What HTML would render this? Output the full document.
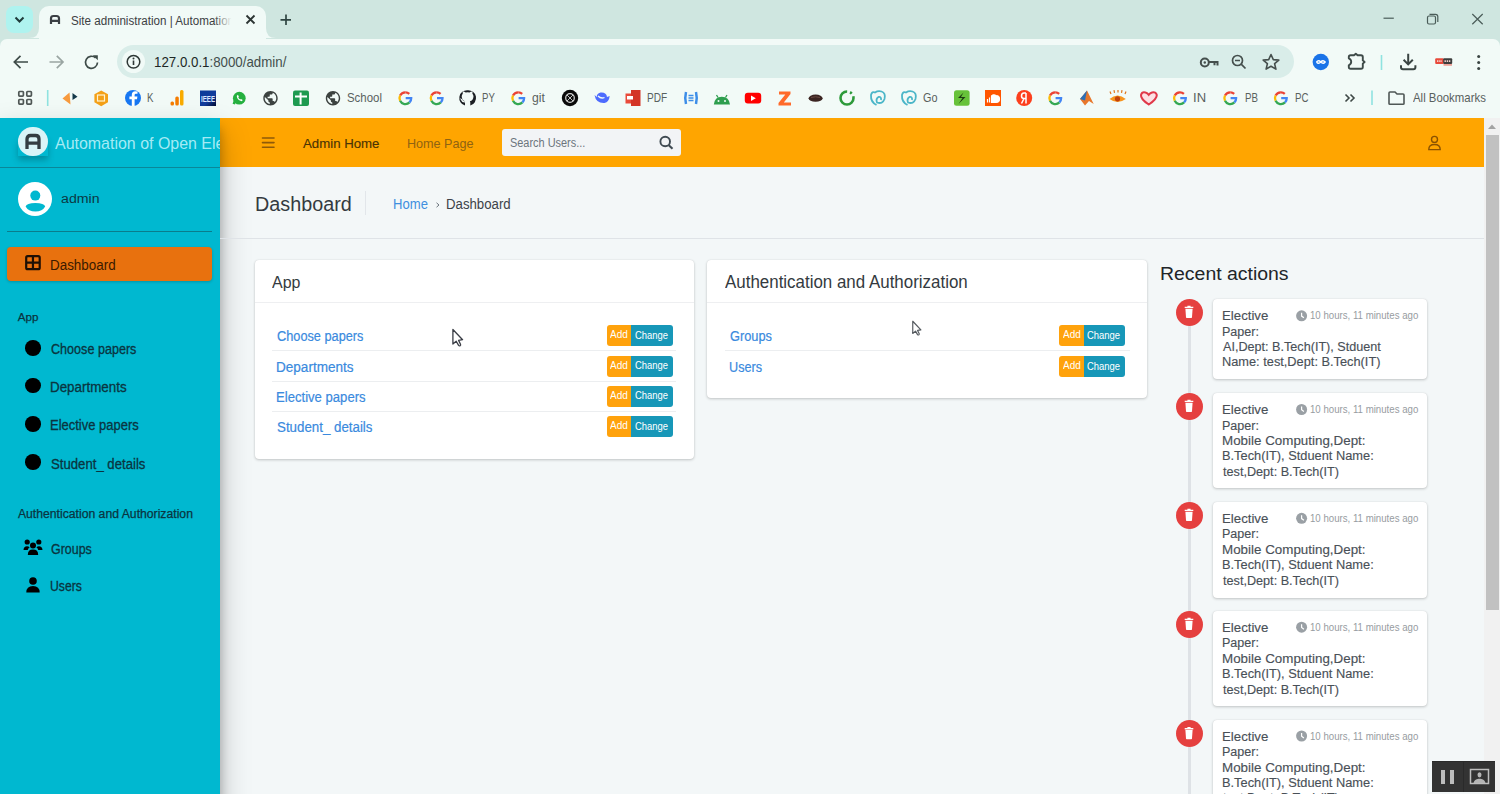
<!DOCTYPE html>
<html><head><meta charset="utf-8">
<style>
*{box-sizing:border-box;margin:0;padding:0}
html,body{width:1500px;height:794px;overflow:hidden;font-family:"Liberation Sans",sans-serif;background:#f3f7f8;position:relative}
.a{position:absolute}
.t{position:absolute;white-space:nowrap;line-height:1;transform-origin:0 0}
svg{position:absolute;overflow:visible}
#tabbar{left:0;top:0;width:1500px;height:39px;background:#cfe6e0}
#toolbar{left:0;top:39px;width:1500px;height:79px;background:#f2faf7;border-radius:7px 7px 0 0}
#sidebar{left:0;top:118px;width:220px;height:676px;background:#00b8d0}
#navbar{left:220px;top:118px;width:1264px;height:49px;background:#ffa500}
#content{left:220px;top:167px;width:1264px;height:627px;background:#f3f7f8}
.card{position:absolute;background:#fff;border-radius:4px;box-shadow:0 0 1px rgba(0,0,0,.13),0 1px 3px rgba(0,0,0,.2)}
.btn{position:absolute;height:21px;border-radius:3px;overflow:hidden}
.btn i{position:absolute;top:0;height:21px}
.rc{position:absolute;width:27px;height:27px;border-radius:50%;background:#e5403f}
.ra{position:absolute;left:1213px;width:214px;background:#fff;border-radius:4px;box-shadow:0 0 1px rgba(0,0,0,.13),0 1px 3px rgba(0,0,0,.2)}
.bm{position:absolute;top:90px;width:16px;height:16px}
</style></head>
<body>
<!-- ===== Chrome tab bar ===== -->
<div id="tabbar" class="a"></div>
<div class="a" style="left:6px;top:6px;width:27px;height:27px;border-radius:8px;background:#aff3ef"></div>
<svg style="left:0;top:0" width="40" height="40"><path d="M15.5 17.5 L19.5 21.5 L23.5 17.5" stroke="#1f3b3b" stroke-width="2" fill="none"/></svg>
<!-- active tab -->
<div class="a" style="left:39px;top:6px;width:227px;height:40px;background:#f1faf7;border-radius:10px 10px 0 0"></div>
<svg style="left:29px;top:28px" width="10" height="10"><path d="M0 10 Q10 10 10 0 L10 10 Z" fill="#f1faf7"/></svg>
<svg style="left:266px;top:28px" width="10" height="10"><path d="M10 10 Q0 10 0 0 L0 10 Z" fill="#f1faf7"/></svg>
<svg style="left:48px;top:13px" width="14" height="14"><path d="M3 11 V5.5 Q3 3 5.5 3 H8.5 Q11 3 11 5.5 V11 M3 7.8 H11" stroke="#3a3f44" stroke-width="2.2" fill="none"/></svg>
<svg style="left:244px;top:13px" width="14" height="14"><path d="M2.5 2.5 L10.5 10.5 M10.5 2.5 L2.5 10.5" stroke="#2b3533" stroke-width="1.8"/></svg>
<svg style="left:279px;top:13px" width="14" height="14"><path d="M7 1.5 V12 M1.5 6.8 H12" stroke="#2f4542" stroke-width="1.7"/></svg>
<!-- window controls -->
<svg style="left:1380px;top:10px" width="110" height="20"><path d="M3.5 8.2 H13.8" stroke="#4a5c58" stroke-width="1.2"/>
<rect x="47.5" y="6" width="8" height="8" rx="1.5" stroke="#4a5c58" stroke-width="1.2" fill="none"/><path d="M49.5 4.3 H55.5 Q57.8 4.3 57.8 6.6 V12" stroke="#4a5c58" stroke-width="1.2" fill="none"/>
<path d="M92.3 4 L102.7 14.3 M102.7 4 L92.3 14.3" stroke="#4a5c58" stroke-width="1.2"/></svg>

<!-- ===== Toolbar ===== -->
<div class="a" style="left:0;top:39px;width:1500px;height:8px;background:#cfe6e0"></div>
<div id="toolbar" class="a"></div>
<svg style="left:0;top:40px" width="110" height="45"><path d="M28 22 H14.5 M20.5 15.8 L14.3 22 L20.5 28.2" stroke="#3e4b48" stroke-width="1.7" fill="none"/>
<path d="M63 22 H49.5 M56.8 15.8 L63 22 L56.8 28.2" stroke="#9aa5a2" stroke-width="1.7" fill="none"/>
<path d="M97.5 22.5 A6 6 0 1 1 95.6 17.9" stroke="#3e4b48" stroke-width="1.7" fill="none"/><path d="M92.8 15.2 H97.8 V20.2 Z" fill="#3e4b48"/></svg>
<div class="a" style="left:117px;top:45px;width:1177px;height:33px;border-radius:17px;background:#d9ede9"></div>
<div class="a" style="left:122px;top:50px;width:23px;height:23px;border-radius:50%;background:#f1faf7"></div>
<svg style="left:122px;top:50px" width="23" height="23"><circle cx="11.5" cy="11.8" r="6.3" stroke="#2e3836" stroke-width="1.5" fill="none"/><path d="M11.5 10.5 V15" stroke="#2e3836" stroke-width="1.6"/><circle cx="11.5" cy="8.4" r="1" fill="#2e3836"/></svg>
<!-- url-bar right icons -->
<svg style="left:1195px;top:50px" width="300" height="25">
 <circle cx="9.8" cy="12.5" r="4" stroke="#454f4d" stroke-width="2" fill="none"/><circle cx="9.8" cy="12.5" r="1.2" fill="#454f4d"/><path d="M13.8 12 H22.5 V15.5 M19.5 12 V15.2" stroke="#454f4d" stroke-width="2" fill="none"/>
 <circle cx="42.5" cy="10.5" r="5" stroke="#454f4d" stroke-width="1.7" fill="none"/><path d="M40 10.5 H45 M46.2 14.2 L50.5 18.5" stroke="#454f4d" stroke-width="1.7"/>
 <path d="M76 4.5 L78.3 9.6 L83.8 10.1 L79.6 13.7 L80.9 19.1 L76 16.2 L71.1 19.1 L72.4 13.7 L68.2 10.1 L73.7 9.6 Z" stroke="#454f4d" stroke-width="1.6" fill="none" stroke-linejoin="round"/>
 <circle cx="125.8" cy="12" r="8.2" fill="#1a73e8"/><path d="M121.5 12 q2-2.5 4.3 0 q2.3 2.5 4.3 0 q-2-2.5 -4.3 0 q-2.3 2.5 -4.3 0" stroke="#fff" stroke-width="1.5" fill="none"/>
 <path d="M155.6 5.2 H159 L160.8 3.7 L162.6 5.2 H166 Q167.8 5.2 167.8 7 V10.4 L169.6 12 L167.8 13.6 V17 Q167.8 18.8 166 18.8 H155.6 Q153.8 18.8 153.8 17 V15.3 Q156.2 14.2 156.2 11.8 Q156.2 9.4 153.8 8.3 V7 Q153.8 5.2 155.6 5.2 Z" stroke="#3e4a48" stroke-width="1.9" fill="none" stroke-linejoin="round"/>
 <path d="M186.5 5 V20" stroke="#8fe3e0" stroke-width="1.6"/>
 <path d="M213.2 3.8 V14.2 M208.6 9.8 L213.2 14.4 L217.8 9.8 M206 15.2 V17.2 Q206 19.2 208 19.2 H218.4 Q220.4 19.2 220.4 17.2 V15.2" stroke="#3a4442" stroke-width="2" fill="none"/>
 <rect x="240.2" y="8.2" width="8.5" height="5.8" rx="1" fill="#e8493b"/><rect x="248.2" y="8.2" width="9" height="5.8" rx="1" fill="#3d3d3d"/><path d="M242 11.1 H247 M249.5 11.1 H255.8" stroke="#f4d0cc" stroke-width="1.6" stroke-dasharray="1.4 .8"/><rect x="248.5" y="14.5" width="8.5" height=".9" fill="#e8493b"/>
 <circle cx="283.7" cy="6.5" r="1.5" fill="#3a4442"/><circle cx="283.7" cy="12.5" r="1.5" fill="#3a4442"/><circle cx="283.7" cy="18.5" r="1.5" fill="#3a4442"/>
</svg>
<!-- bookmarks bar icons -->
<svg style="left:0;top:82px" width="1500" height="30">
 <g stroke="#4f5755" stroke-width="1.7" fill="none"><rect x="18.8" y="9.5" width="4.6" height="4.6" rx=".8"/><rect x="26.8" y="9.5" width="4.6" height="4.6" rx=".8"/><rect x="18.8" y="17.5" width="4.6" height="4.6" rx=".8"/><rect x="26.8" y="17.5" width="4.6" height="4.6" rx=".8"/></g>
 <path d="M47.7 8 V24" stroke="#8fe3e0" stroke-width="1.6"/>
 <path d="M62.5 16.5 L69.5 10.5 L70.5 22.5 Z" fill="#f79a3e"/><path d="M72.5 11 L77.5 14.8 L72.5 18 Z" fill="#13384a"/>
 <path d="M101.2 8.5 L108 12.3 V20.3 L101.2 24.2 L94.4 20.3 V12.3 Z" fill="#f4a017"/><rect x="97.5" y="13" width="7" height="6" fill="none" stroke="#fff3d0" stroke-width="1.2"/>
 <circle cx="133" cy="16" r="8" fill="#1877f2"/><path d="M134.6 24 V17.3 H137 L137.4 14.6 H134.6 V13 Q134.6 11.8 135.9 11.8 H137.5 V9.5 Q136.6 9.3 135.3 9.3 Q131.8 9.3 131.8 13 V14.6 H129.4 V17.3 H131.8 V24 Z" fill="#fff"/>
 <rect x="170.5" y="19.5" width="3.5" height="4" rx="1.5" fill="#f57c00"/><rect x="175.3" y="14.5" width="3.5" height="9" rx="1.5" fill="#f57c00"/><rect x="180" y="8" width="3.5" height="15.5" rx="1.5" fill="#f9ab00"/>
 <defs><linearGradient id="ieee" x1="0" y1="0" x2="1" y2="1"><stop offset="0" stop-color="#0a3a9a"/><stop offset=".6" stop-color="#123c9c"/><stop offset="1" stop-color="#020a30"/></linearGradient></defs><rect x="200" y="8.5" width="16" height="15.5" fill="url(#ieee)"/><text x="201" y="20.3" font-family="Liberation Sans" font-size="9.5" font-weight="700" fill="#dde6ff" textLength="14" lengthAdjust="spacingAndGlyphs">IEEE</text>
 <g transform="translate(239.3,16.2) scale(.85) translate(-239.5,-16)"><circle cx="239.5" cy="16" r="7.5" fill="#25b03f"/><path d="M233 23 L234.5 19" stroke="#25b03f" stroke-width="3"/><path d="M236.5 13.5 Q237 18.5 242.5 19.5 L243.5 18 L241.5 16.8 L240.5 17.5 Q238.8 16.5 238.3 15 L239 14 L237.8 12 Z" fill="#fff"/></g>
 <g transform="translate(261.86,7.56) scale(.72)"><circle cx="12" cy="12" r="9.6" fill="#f1faf7"/><path d="M12 2C6.48 2 2 6.48 2 12s4.48 10 10 10 10-4.48 10-10S17.52 2 12 2zm-1 17.930c-3.95-.49-7-3.850-7-7.930 0-.62.08-1.210.21-1.790L9 15v1c0 1.100.9 2 2 2v1.930zm6.900-2.540c-.26-.81-1-1.390-1.900-1.390h-1v-3c0-.55-.45-1-1-1H8v-2h2c.55 0 1-.45 1-1V7h2c1.100 0 2-.9 2-2v-.41c2.930 1.190 5 4.060 5 7.410 0 2.080-.8 3.970-2.100 5.390z" fill="#3c4240"/></g>
 <rect x="293" y="8.5" width="16" height="15.5" rx="2" fill="#1e9a50"/><path d="M300.6 10.5 V22.5 M295 14.5 H307" stroke="#fff" stroke-width="2"/>
 <g transform="translate(324.36,7.56) scale(.72)"><circle cx="12" cy="12" r="9.6" fill="#f1faf7"/><path d="M12 2C6.48 2 2 6.48 2 12s4.48 10 10 10 10-4.48 10-10S17.52 2 12 2zm-1 17.930c-3.95-.49-7-3.850-7-7.930 0-.62.08-1.210.21-1.790L9 15v1c0 1.100.9 2 2 2v1.930zm6.900-2.540c-.26-.81-1-1.390-1.900-1.390h-1v-3c0-.55-.45-1-1-1H8v-2h2c.55 0 1-.45 1-1V7h2c1.100 0 2-.9 2-2v-.41c2.930 1.190 5 4.060 5 7.410 0 2.080-.8 3.970-2.100 5.390z" fill="#3c4240"/></g>

</svg>
<svg style="left:0;top:82px" width="1500" height="30">
 <defs><g id="G"><path d="M5.7 0.2 A5.8 5.8 0 0 0 0.4 3.4" stroke="#ea4335" stroke-width="2.3" fill="none"/><path d="M0.4 3.4 A5.8 5.8 0 0 0 0.4 8.6" stroke="#fbbc05" stroke-width="2.3" fill="none"/><path d="M0.4 8.6 A5.8 5.8 0 0 0 9.8 10.2" stroke="#34a853" stroke-width="2.3" fill="none"/><path d="M9.8 10.2 A5.8 5.8 0 0 0 11.5 6 H6" stroke="#4285f4" stroke-width="2.3" fill="none"/><path d="M5.7 0.2 A5.8 5.8 0 0 1 9.6 1.7" stroke="#ea4335" stroke-width="2.3" fill="none"/></g></defs>
 <use href="#G" x="399.7" y="10.2"/><use href="#G" x="431" y="10.2"/><use href="#G" x="512.6" y="10.2"/><use href="#G" x="1049.6" y="10.2"/><use href="#G" x="1174.3" y="10.2"/><use href="#G" x="1224.6" y="10.2"/><use href="#G" x="1275.2" y="10.2"/>
 <path d="M467.6 8.2 A7.8 7.8 0 0 0 465 23.5 V20.5 Q462 20.8 461 18 Q460.5 17 459.8 16.6 Q462 16 462.8 18.2 Q463.8 19.8 465.3 19.2 Q462 18.5 461.7 14.5 Q461.7 12.8 462.8 11.8 Q462.4 10.2 463 9.6 Q464.5 9.6 465.7 10.6 Q467.6 10.1 469.5 10.6 Q470.7 9.6 472.2 9.6 Q472.8 10.2 472.4 11.8 Q473.5 12.8 473.5 14.5 Q473.2 18.5 469.9 19.2 Q470.3 20 470.3 21 V23.5 A7.8 7.8 0 0 0 467.6 8.2 Z" fill="#1b1f23"/>
 <circle cx="570" cy="16" r="8.2" fill="#0a0a0a"/><circle cx="570" cy="16" r="4.3" stroke="#d8d8d8" stroke-width="1.2" fill="none"/><path d="M567 13 L573 19 M573 13 L567 19" stroke="#bbb" stroke-width="1"/>
 <path d="M594.5 13 Q596 21.5 604.5 21 Q609 20 609.7 14 L607 15 Q606.5 10 600.5 10.5 Q596.5 11.5 596.8 15 Z" fill="#4d6bfe"/><path d="M598 14 Q601 17 604.5 15.5" stroke="#f1faf7" stroke-width="1.3" fill="none"/>
 <rect x="625.5" y="11.5" width="9" height="10" fill="#e94a3a"/><path d="M631 8 H640.5 V24 H631 Z" fill="#d33426"/><rect x="627" y="14" width="6" height="3.5" fill="#fff"/>
 <path d="M686 10 Q684.5 16 686 22 M696 10 Q697.5 16 696 22" stroke="#3c8de8" stroke-width="2.5" fill="none"/><path d="M688.5 13.5 H693.5 M688.5 16 H693.5 M688.5 18.5 H693.5" stroke="#3c8de8" stroke-width="1.5"/>
 <path d="M713.8 22.5 Q714.5 15 721.8 14.7 Q729.2 15 730 22.5 Z" fill="#2e9e4e"/><path d="M716.5 13 L718 15.5 M727 13 L725.5 15.5" stroke="#2e9e4e" stroke-width="1.3"/><circle cx="718.5" cy="19" r="1" fill="#f1faf7"/><circle cx="725" cy="19" r="1" fill="#f1faf7"/>
 <rect x="744.8" y="10.8" width="16.4" height="10.8" rx="3" fill="#ff0000"/><path d="M751 13.5 L755.8 16.2 L751 18.9 Z" fill="#fff"/>
 <path d="M779 9.5 H790.5 V12 L783.8 20.5 H791 V23.5 H778.5 V21 L785.3 12.5 H779 Z" fill="#ff6a2a"/>
 <ellipse cx="815.6" cy="16.2" rx="7" ry="3.6" fill="#3b2522"/><path d="M811 15.5 Q815.6 14 820 15.5" stroke="#6b4a42" stroke-width="1" fill="none"/>
 <circle cx="847" cy="16" r="6.5" stroke="#2d9a3a" stroke-width="2.6" fill="none" stroke-dasharray="30 3 2 3"/>
 <path d="M876.5 23 Q870.5 20 871 13 Q872 9 875 10.5 Q878 8.5 881.5 9.5 Q886 11 884.5 17 Q882.5 22.5 877 20.5 Q875.5 17 878.5 15 Q881.5 14.5 881 18" stroke="#4bb6c8" stroke-width="1.8" fill="none"/>
 <path d="M907.5 23 Q901.5 20 902 13 Q903 9 906 10.5 Q909 8.5 912.5 9.5 Q917 11 915.5 17 Q913.5 22.5 908 20.5 Q906.5 17 909.5 15 Q912.5 14.5 912 18" stroke="#4bb6c8" stroke-width="1.8" fill="none"/>
 <rect x="954" y="8.2" width="15.6" height="15.6" rx="2.5" fill="#67c23a"/><path d="M963.5 10.5 L958 16 H962.5 L958.5 22 L965.5 15 H961 Z" fill="#1e3a12"/>
 <rect x="985" y="8" width="16" height="16" fill="#ff5500"/><path d="M987.5 20.5 V17 M989.5 20.5 V15.5 M991.5 20.5 V14 Q993.5 12 996 13.5 Q999.5 13.5 999.5 17 Q999.5 20.5 996 20.5 Z" stroke="#fff" stroke-width="1.2" fill="#fff"/>
 <circle cx="1024.2" cy="16" r="8" fill="#fc3f1d"/><path d="M1026 11 H1024 Q1021.5 11 1021.5 14 Q1021.5 16.5 1024 16.5 H1026 M1026 11 V21.5 M1024 16.5 L1021.5 21.5" stroke="#fff" stroke-width="1.5" fill="none"/>
 <path d="M1080 17 L1087 8.5 L1093.7 22 L1089 19 L1085 23.5 Z" fill="#e8772b"/><path d="M1080 17 L1085 18.5 L1087 8.5 Z" fill="#2d6fb7"/>
 <path d="M1109.5 17 Q1117.5 10 1125.8 17 Q1117.5 23 1109.5 17 Z" fill="#f7941d"/><circle cx="1117.5" cy="16.8" r="2.6" fill="#c2410c"/><path d="M1111 12 L1110 9.5 M1114.5 10.8 L1114 8.2 M1118 10.5 V8 M1121.5 10.8 L1122 8.2 M1125 12 L1126 9.5" stroke="#e0741a" stroke-width="1.2"/>
 <path d="M1148.8 22.5 Q1140.5 17 1141 13 Q1142 9.5 1145.5 10.5 Q1147.5 11 1148.8 12.8 Q1150 11 1152 10.5 Q1156 9.5 1156.8 13 Q1157 17 1148.8 22.5 Z" stroke="#e0394a" stroke-width="2" fill="#fde0e4"/>
 <path d="M1345.5 12.5 L1349 16 L1345.5 19.5 M1350.5 12.5 L1354 16 L1350.5 19.5" stroke="#3e4846" stroke-width="1.6" fill="none"/>
 <path d="M1372 8.5 V23" stroke="#8fe3e0" stroke-width="1.6"/>
 <path d="M1389 11 Q1389 10 1390 10 H1395 L1397 12 H1403 Q1404 12 1404 13 V21.5 Q1404 22.3 1403 22.3 H1390 Q1389 22.3 1389 21.5 Z" stroke="#4f5755" stroke-width="1.6" fill="none"/>
</svg>

<!-- ===== Page: sidebar ===== -->
<div id="sidebar" class="a"></div>
<div class="a" style="left:18px;top:138px;width:30px;height:18px;box-shadow:0 4px 6px rgba(0,60,70,.35)"></div>
<div class="a" style="left:18.3px;top:126.8px;width:29.5px;height:29.5px;border-radius:50%;background:#d9f4f7"></div>
<svg style="left:18px;top:127px" width="30" height="30"><path d="M9 22 V12 Q9 8.5 12.5 8.5 H17.5 Q21 8.5 21 12 V22 M9 16.2 H21" stroke="#333d42" stroke-width="3.3" fill="none"/></svg>
<div class="a" style="left:0;top:167px;width:220px;height:1px;background:#0a8799"></div>
<!-- avatar -->
<svg style="left:18px;top:182px" width="34" height="34"><circle cx="17" cy="17" r="17" fill="#fff"/><circle cx="17.3" cy="13.6" r="5" fill="#00b8d0"/><path d="M7.6 24.6 Q8.5 21 17.4 21 Q26.3 21 27.2 24.6 Q24.5 29.6 17.4 29.6 Q10.3 29.6 7.6 24.6 Z" fill="#00b8d0"/></svg>
<div class="a" style="left:7px;top:231px;width:205px;height:1px;background:#0a7d8c"></div>
<!-- active dashboard -->
<div class="a" style="left:7px;top:247px;width:205px;height:34px;border-radius:4px;background:#e8710e;box-shadow:0 1px 3px rgba(0,0,0,.2)"></div>
<svg style="left:25px;top:255px" width="17" height="17"><rect x="1.2" y="1.2" width="13.5" height="13" rx="1.5" stroke="#1f1005" stroke-width="2.2" fill="none"/><path d="M7.95 1.5 V14 M1.5 7.7 H14.5" stroke="#1f1005" stroke-width="2.2"/></svg>
<!-- nav circles -->
<div class="a" style="left:25.2px;top:340.3px;width:15.6px;height:15.6px;border-radius:50%;background:#000"></div>
<div class="a" style="left:25.2px;top:377.9px;width:15.6px;height:15.6px;border-radius:50%;background:#000"></div>
<div class="a" style="left:25.2px;top:416.2px;width:15.6px;height:15.6px;border-radius:50%;background:#000"></div>
<div class="a" style="left:25.2px;top:454.2px;width:15.6px;height:15.6px;border-radius:50%;background:#000"></div>
<svg style="left:23px;top:539px" width="21" height="17"><circle cx="4.2" cy="3" r="2.6" fill="#000"/><circle cx="15.8" cy="3" r="2.6" fill="#000"/><circle cx="10" cy="6.5" r="3" fill="#000"/><path d="M0.5 11 Q0.8 7.3 4 7.3 Q5.5 7.3 6.6 8.2 Q5 9.5 4.8 11 Z M19.5 11 Q19.2 7.3 16 7.3 Q14.5 7.3 13.4 8.2 Q15 9.5 15.2 11 Z M4.8 16 Q4.8 10.6 10 10.6 Q15.2 10.6 15.2 16 Z" fill="#000"/></svg>
<svg style="left:26px;top:577px" width="15" height="16"><circle cx="7" cy="4" r="3.8" fill="#000"/><path d="M0.3 15.6 Q0.3 9 7 9 Q13.7 9 13.7 15.6 Z" fill="#000"/></svg>

<!-- ===== Navbar ===== -->
<div id="navbar" class="a"></div>
<div class="a" style="left:0;top:118px;width:220px;height:700px;box-shadow:0 14px 28px rgba(0,0,0,.25),0 10px 10px rgba(0,0,0,.22)"></div>
<svg style="left:262px;top:136px" width="13" height="13"><path d="M0.5 2 H12 M0.5 6.6 H12 M0.5 11.2 H12" stroke="#8f5a08" stroke-width="1.6" stroke-linecap="round"/></svg>
<div class="a" style="left:502px;top:129px;width:178.5px;height:26.5px;border-radius:3px;background:#f2f4f6"></div>
<svg style="left:658px;top:134px" width="17" height="17"><circle cx="7.2" cy="7.5" r="4.8" stroke="#3f4a52" stroke-width="1.9" fill="none"/><path d="M10.8 11.2 L14.5 14.8" stroke="#3f4a52" stroke-width="2.1"/></svg>
<svg style="left:1426px;top:134px" width="17" height="18"><circle cx="8.5" cy="5.4" r="3" stroke="#8a5200" stroke-width="1.4" fill="none"/><path d="M2.8 15.6 Q2.8 10.5 8.5 10.5 Q14.2 10.5 14.2 15.6 Z" stroke="#8a5200" stroke-width="1.4" fill="none"/></svg>

<!-- ===== Content ===== -->
<div class="a" style="left:365px;top:191px;width:1px;height:24px;background:#e2e6ea"></div>
<svg style="left:434px;top:200px" width="8" height="10"><path d="M2.5 2.8 L5 5 L2.5 7.2" stroke="#6c757d" stroke-width="1" fill="none"/></svg>
<div class="a" style="left:220px;top:238px;width:1264px;height:1px;background:#dfe3e7"></div>

<!-- App card -->
<div class="card" style="left:255px;top:260px;width:439px;height:199px"></div>
<div class="a" style="left:255px;top:302px;width:439px;height:1px;background:#eeeff1"></div>
<div class="a" style="left:272px;top:350px;width:404px;height:1px;background:#eceef0"></div>
<div class="a" style="left:272px;top:381px;width:404px;height:1px;background:#eceef0"></div>
<div class="a" style="left:272px;top:411px;width:404px;height:1px;background:#eceef0"></div>
<!-- Auth card -->
<div class="card" style="left:707px;top:260px;width:440px;height:138px"></div>
<div class="a" style="left:707px;top:302px;width:440px;height:1px;background:#eeeff1"></div>
<div class="a" style="left:725px;top:350px;width:405px;height:1px;background:#eceef0"></div>

<!-- buttons -->
<div class="btn" style="left:607px;top:325px;width:66px"><i style="left:0;width:24px;background:#ffa20c"></i><i style="left:24px;width:42px;background:#1797b8"></i></div>
<div class="btn" style="left:607px;top:355.5px;width:66px"><i style="left:0;width:24px;background:#ffa20c"></i><i style="left:24px;width:42px;background:#1797b8"></i></div>
<div class="btn" style="left:607px;top:385.5px;width:66px"><i style="left:0;width:24px;background:#ffa20c"></i><i style="left:24px;width:42px;background:#1797b8"></i></div>
<div class="btn" style="left:607px;top:416px;width:66px"><i style="left:0;width:24px;background:#ffa20c"></i><i style="left:24px;width:42px;background:#1797b8"></i></div>
<div class="btn" style="left:1059px;top:325px;width:66px"><i style="left:0;width:24.5px;background:#ffa20c"></i><i style="left:24.5px;width:41.5px;background:#1797b8"></i></div>
<div class="btn" style="left:1059px;top:355.5px;width:66px"><i style="left:0;width:24.5px;background:#ffa20c"></i><i style="left:24.5px;width:41.5px;background:#1797b8"></i></div>

<!-- cursors -->
<svg style="left:452px;top:328px" width="14" height="20"><path d="M0.9 1.5 L0.9 16 L4.2 13.2 L6.6 17.4 Q7.3 18.2 8.2 17.6 Q8.9 17 8.5 16.2 L6.6 12.4 L10.6 11.7 Z" fill="#fff" stroke="#3a3d45" stroke-width="1.3" stroke-linejoin="round"/></svg>
<svg style="left:911.5px;top:319.8px" width="14" height="20"><g transform="scale(.84)"><path d="M0.9 1.5 L0.9 16 L4.2 13.2 L6.6 17.4 Q7.3 18.2 8.2 17.6 Q8.9 17 8.5 16.2 L6.6 12.4 L10.6 11.7 Z" fill="#fff" stroke="#555a5f" stroke-width="1.4" stroke-linejoin="round"/></g></svg>

<!-- Recent actions timeline -->
<div class="a" style="left:1187.5px;top:312px;width:3px;height:482px;background:#dee2e6"></div>
<div class="ra" style="top:299.2px;height:80px"></div>
<div class="ra" style="top:393.3px;height:94.7px"></div>
<div class="ra" style="top:502px;height:95.5px"></div>
<div class="ra" style="top:611px;height:95.4px"></div>
<div class="ra" style="top:719.8px;height:100px"></div>
<div class="rc" style="left:1175.5px;top:299px"></div>
<div class="rc" style="left:1175.5px;top:392.8px"></div>
<div class="rc" style="left:1175.5px;top:501.7px"></div>
<div class="rc" style="left:1175.5px;top:610.5px"></div>
<div class="rc" style="left:1175.5px;top:719.7px"></div>
<svg style="left:0;top:0" width="1500" height="794">
 <defs><g id="trash"><path d="M-4.3 -4.6 H4.3 M-1.6 -5.6 H1.6" stroke="#fff" stroke-width="1.4"/><path d="M-3.6 -3.3 H3.6 L3 5.3 Q3 6 2.3 6 H-2.3 Q-3 6 -3 5.3 Z" fill="#fff"/></g>
 <g id="clock"><circle r="5.5" fill="#9aa0a5"/><path d="M0 -3 V0.3 L2.3 2" stroke="#fff" stroke-width="1.2" fill="none"/></g></defs>
 <use href="#trash" x="1189" y="312"/><use href="#trash" x="1189" y="406"/><use href="#trash" x="1189" y="515"/><use href="#trash" x="1189" y="624"/><use href="#trash" x="1189" y="733.3"/>
 <use href="#clock" x="1301.6" y="315.8"/><use href="#clock" x="1301.6" y="409.5"/><use href="#clock" x="1301.6" y="518.3"/><use href="#clock" x="1301.6" y="627.2"/><use href="#clock" x="1301.6" y="736"/>
</svg>

<span class="t" style="left:153.84px;top:53.96px;font-size:15.41px;color:#1d2725;font-weight:400;transform:scaleX(0.8633);">127.0.0.1<span style="color:#434e4c">:8000/admin/</span></span>
<span class="t" style="left:147.00px;top:93.41px;font-size:11.92px;color:#59615e;font-weight:400;transform:scaleX(0.8125);">K</span>
<span class="t" style="left:346.80px;top:93.41px;font-size:11.92px;color:#59615e;font-weight:400;transform:scaleX(0.9592);">School</span>
<span class="t" style="left:481.60px;top:93.41px;font-size:11.92px;color:#59615e;font-weight:400;transform:scaleX(0.8092);">PY</span>
<span class="t" style="left:532.20px;top:93.41px;font-size:11.92px;color:#59615e;font-weight:400;transform:scaleX(1.0251);">git</span>
<span class="t" style="left:646.90px;top:93.41px;font-size:11.92px;color:#59615e;font-weight:400;transform:scaleX(0.8454);">PDF</span>
<span class="t" style="left:923.00px;top:93.41px;font-size:11.92px;color:#59615e;font-weight:400;transform:scaleX(0.9101);">Go</span>
<span class="t" style="left:1193.10px;top:93.41px;font-size:11.92px;color:#59615e;font-weight:400;transform:scaleX(1.0962);">IN</span>
<span class="t" style="left:1244.50px;top:93.41px;font-size:11.92px;color:#59615e;font-weight:400;transform:scaleX(0.8155);">PB</span>
<span class="t" style="left:1295.30px;top:93.41px;font-size:11.92px;color:#59615e;font-weight:400;transform:scaleX(0.8146);">PC</span>
<span class="t" style="left:1412.60px;top:93.41px;font-size:11.92px;color:#59615e;font-weight:400;transform:scaleX(0.9575);">All Bookmarks</span>
<span class="t" style="left:61.20px;top:192.33px;font-size:13.08px;color:#0b3844;font-weight:400;transform:scaleX(1.0836);">admin</span>
<span class="t" style="left:49.86px;top:257.84px;font-size:14.24px;color:#3a1a00;font-weight:400;transform:scaleX(0.9421);">Dashboard</span>
<span class="t" style="left:17.80px;top:310.56px;font-size:11.63px;color:#0a3440;font-weight:400;-webkit-text-stroke:.25px #0a3440">App</span>
<span class="t" style="left:51.00px;top:342.34px;font-size:14.24px;color:#0a3440;font-weight:400;transform:scaleX(0.8846);-webkit-text-stroke:.3px #0a3440">Choose papers</span>
<span class="t" style="left:50.06px;top:379.84px;font-size:14.24px;color:#0a3440;font-weight:400;transform:scaleX(0.9407);-webkit-text-stroke:.3px #0a3440">Departments</span>
<span class="t" style="left:50.09px;top:418.44px;font-size:14.24px;color:#0a3440;font-weight:400;transform:scaleX(0.9116);-webkit-text-stroke:.3px #0a3440">Elective papers</span>
<span class="t" style="left:51.00px;top:456.84px;font-size:14.24px;color:#0a3440;font-weight:400;transform:scaleX(0.9248);-webkit-text-stroke:.3px #0a3440">Student_ details</span>
<span class="t" style="left:17.90px;top:508.46px;font-size:12.21px;color:#0a3440;font-weight:400;-webkit-text-stroke:.25px #0a3440">Authentication and Authorization</span>
<span class="t" style="left:51.00px;top:541.74px;font-size:14.24px;color:#0a3440;font-weight:400;transform:scaleX(0.8741);-webkit-text-stroke:.3px #0a3440">Groups</span>
<span class="t" style="left:50.14px;top:579.44px;font-size:14.24px;color:#0a3440;font-weight:400;transform:scaleX(0.8598);-webkit-text-stroke:.3px #0a3440">Users</span>
<span class="t" style="left:302.60px;top:137.03px;font-size:13.66px;color:#4a3304;font-weight:400;transform:scaleX(0.9689);-webkit-text-stroke:.15px #4a3304">Admin Home</span>
<span class="t" style="left:407.06px;top:137.28px;font-size:13.37px;color:#8f6312;font-weight:400;transform:scaleX(0.9433);">Home Page</span>
<span class="t" style="left:509.60px;top:137.16px;font-size:12.21px;color:#6c757d;font-weight:400;transform:scaleX(0.8959);">Search Users...</span>
<span class="t" style="left:254.63px;top:193.77px;font-size:20.35px;color:#343a40;font-weight:400;transform:scaleX(0.9718);">Dashboard</span>
<span class="t" style="left:393.46px;top:198.09px;font-size:13.95px;color:#3f8fdf;font-weight:400;transform:scaleX(0.9389);">Home</span>
<span class="t" style="left:446.45px;top:198.09px;font-size:13.95px;color:#3d4349;font-weight:400;transform:scaleX(0.9483);">Dashboard</span>
<span class="t" style="left:272.30px;top:274.20px;font-size:17.01px;color:#343a40;font-weight:400;transform:scaleX(0.9398);">App</span>
<span class="t" style="left:276.70px;top:329.42px;font-size:14.39px;color:#3a8ade;font-weight:400;transform:scaleX(0.8869);-webkit-text-stroke:.2px #3a8ade">Choose papers</span>
<span class="t" style="left:275.76px;top:359.72px;font-size:14.39px;color:#3a8ade;font-weight:400;transform:scaleX(0.9432);-webkit-text-stroke:.2px #3a8ade">Departments</span>
<span class="t" style="left:275.79px;top:390.02px;font-size:14.39px;color:#3a8ade;font-weight:400;transform:scaleX(0.9115);-webkit-text-stroke:.2px #3a8ade">Elective papers</span>
<span class="t" style="left:276.70px;top:420.32px;font-size:14.39px;color:#3a8ade;font-weight:400;transform:scaleX(0.9261);-webkit-text-stroke:.2px #3a8ade">Student_ details</span>
<span class="t" style="left:725.00px;top:273.74px;font-size:17.44px;color:#343a40;font-weight:400;transform:scaleX(0.9705);">Authentication and Authorization</span>
<span class="t" style="left:729.60px;top:329.32px;font-size:14.39px;color:#3a8ade;font-weight:400;transform:scaleX(0.8903);-webkit-text-stroke:.2px #3a8ade">Groups</span>
<span class="t" style="left:728.72px;top:359.72px;font-size:14.39px;color:#3a8ade;font-weight:400;transform:scaleX(0.8803);-webkit-text-stroke:.2px #3a8ade">Users</span>
<span class="t" style="left:610.20px;top:330.29px;font-size:10.17px;color:#fff;font-weight:400;transform:scaleX(0.9815);">Add</span>
<span class="t" style="left:634.80px;top:330.64px;font-size:10.47px;color:#fff;font-weight:400;transform:scaleX(0.8994);">Change</span>
<span class="t" style="left:610.20px;top:360.89px;font-size:10.17px;color:#fff;font-weight:400;transform:scaleX(0.9815);">Add</span>
<span class="t" style="left:634.80px;top:361.24px;font-size:10.47px;color:#fff;font-weight:400;transform:scaleX(0.8994);">Change</span>
<span class="t" style="left:610.20px;top:390.79px;font-size:10.17px;color:#fff;font-weight:400;transform:scaleX(0.9815);">Add</span>
<span class="t" style="left:634.80px;top:391.14px;font-size:10.47px;color:#fff;font-weight:400;transform:scaleX(0.8994);">Change</span>
<span class="t" style="left:610.20px;top:421.29px;font-size:10.17px;color:#fff;font-weight:400;transform:scaleX(0.9815);">Add</span>
<span class="t" style="left:634.80px;top:421.64px;font-size:10.47px;color:#fff;font-weight:400;transform:scaleX(0.8994);">Change</span>
<span class="t" style="left:1062.50px;top:330.39px;font-size:10.17px;color:#fff;font-weight:400;transform:scaleX(0.9815);">Add</span>
<span class="t" style="left:1087.20px;top:330.74px;font-size:10.47px;color:#fff;font-weight:400;transform:scaleX(0.8994);">Change</span>
<span class="t" style="left:1062.50px;top:361.29px;font-size:10.17px;color:#fff;font-weight:400;transform:scaleX(0.9815);">Add</span>
<span class="t" style="left:1087.20px;top:361.64px;font-size:10.47px;color:#fff;font-weight:400;transform:scaleX(0.8994);">Change</span>
<span class="t" style="left:1160.47px;top:265.11px;font-size:18.90px;color:#212529;font-weight:400;transform:scaleX(1.0290);">Recent actions</span>
<span class="t" style="left:1222.03px;top:309.33px;font-size:13.66px;color:#495057;font-weight:400;transform:scaleX(0.9692);-webkit-text-stroke:.15px #495057">Elective</span>
<span class="t" style="left:1222.08px;top:324.68px;font-size:13.66px;color:#495057;font-weight:400;transform:scaleX(0.9183);-webkit-text-stroke:.15px #495057">Paper:</span>
<span class="t" style="left:1223.00px;top:340.03px;font-size:13.66px;color:#495057;font-weight:400;transform:scaleX(0.9241);-webkit-text-stroke:.15px #495057">AI,Dept: B.Tech(IT), Stduent</span>
<span class="t" style="left:1222.06px;top:355.38px;font-size:13.66px;color:#495057;font-weight:400;transform:scaleX(0.9363);-webkit-text-stroke:.15px #495057">Name: test,Dept: B.Tech(IT)</span>
<span class="t" style="left:1309.60px;top:310.99px;font-size:10.17px;color:#979ca1;font-weight:400;transform:scaleX(0.9509);">10 hours, 11 minutes ago</span>
<span class="t" style="left:1222.03px;top:403.43px;font-size:13.66px;color:#495057;font-weight:400;transform:scaleX(0.9692);-webkit-text-stroke:.15px #495057">Elective</span>
<span class="t" style="left:1222.08px;top:418.78px;font-size:13.66px;color:#495057;font-weight:400;transform:scaleX(0.9183);-webkit-text-stroke:.15px #495057">Paper:</span>
<span class="t" style="left:1222.02px;top:434.13px;font-size:13.66px;color:#495057;font-weight:400;transform:scaleX(0.9799);-webkit-text-stroke:.15px #495057">Mobile Computing,Dept:</span>
<span class="t" style="left:1222.06px;top:449.48px;font-size:13.66px;color:#495057;font-weight:400;transform:scaleX(0.9383);-webkit-text-stroke:.15px #495057">B.Tech(IT), Stduent Name:</span>
<span class="t" style="left:1223.00px;top:464.83px;font-size:13.66px;color:#495057;font-weight:400;transform:scaleX(0.9264);-webkit-text-stroke:.15px #495057">test,Dept: B.Tech(IT)</span>
<span class="t" style="left:1309.60px;top:405.09px;font-size:10.17px;color:#979ca1;font-weight:400;transform:scaleX(0.9509);">10 hours, 11 minutes ago</span>
<span class="t" style="left:1222.03px;top:512.13px;font-size:13.66px;color:#495057;font-weight:400;transform:scaleX(0.9692);-webkit-text-stroke:.15px #495057">Elective</span>
<span class="t" style="left:1222.08px;top:527.48px;font-size:13.66px;color:#495057;font-weight:400;transform:scaleX(0.9183);-webkit-text-stroke:.15px #495057">Paper:</span>
<span class="t" style="left:1222.02px;top:542.83px;font-size:13.66px;color:#495057;font-weight:400;transform:scaleX(0.9799);-webkit-text-stroke:.15px #495057">Mobile Computing,Dept:</span>
<span class="t" style="left:1222.06px;top:558.18px;font-size:13.66px;color:#495057;font-weight:400;transform:scaleX(0.9383);-webkit-text-stroke:.15px #495057">B.Tech(IT), Stduent Name:</span>
<span class="t" style="left:1223.00px;top:573.53px;font-size:13.66px;color:#495057;font-weight:400;transform:scaleX(0.9264);-webkit-text-stroke:.15px #495057">test,Dept: B.Tech(IT)</span>
<span class="t" style="left:1309.60px;top:513.79px;font-size:10.17px;color:#979ca1;font-weight:400;transform:scaleX(0.9509);">10 hours, 11 minutes ago</span>
<span class="t" style="left:1222.03px;top:621.13px;font-size:13.66px;color:#495057;font-weight:400;transform:scaleX(0.9692);-webkit-text-stroke:.15px #495057">Elective</span>
<span class="t" style="left:1222.08px;top:636.48px;font-size:13.66px;color:#495057;font-weight:400;transform:scaleX(0.9183);-webkit-text-stroke:.15px #495057">Paper:</span>
<span class="t" style="left:1222.02px;top:651.83px;font-size:13.66px;color:#495057;font-weight:400;transform:scaleX(0.9799);-webkit-text-stroke:.15px #495057">Mobile Computing,Dept:</span>
<span class="t" style="left:1222.06px;top:667.18px;font-size:13.66px;color:#495057;font-weight:400;transform:scaleX(0.9383);-webkit-text-stroke:.15px #495057">B.Tech(IT), Stduent Name:</span>
<span class="t" style="left:1223.00px;top:682.53px;font-size:13.66px;color:#495057;font-weight:400;transform:scaleX(0.9264);-webkit-text-stroke:.15px #495057">test,Dept: B.Tech(IT)</span>
<span class="t" style="left:1309.60px;top:622.79px;font-size:10.17px;color:#979ca1;font-weight:400;transform:scaleX(0.9509);">10 hours, 11 minutes ago</span>
<span class="t" style="left:1222.03px;top:729.93px;font-size:13.66px;color:#495057;font-weight:400;transform:scaleX(0.9692);-webkit-text-stroke:.15px #495057">Elective</span>
<span class="t" style="left:1222.08px;top:745.28px;font-size:13.66px;color:#495057;font-weight:400;transform:scaleX(0.9183);-webkit-text-stroke:.15px #495057">Paper:</span>
<span class="t" style="left:1222.02px;top:760.63px;font-size:13.66px;color:#495057;font-weight:400;transform:scaleX(0.9799);-webkit-text-stroke:.15px #495057">Mobile Computing,Dept:</span>
<span class="t" style="left:1222.06px;top:775.98px;font-size:13.66px;color:#495057;font-weight:400;transform:scaleX(0.9383);-webkit-text-stroke:.15px #495057">B.Tech(IT), Stduent Name:</span>
<span class="t" style="left:1223.00px;top:791.33px;font-size:13.66px;color:#495057;font-weight:400;transform:scaleX(0.9264);-webkit-text-stroke:.15px #495057">test,Dept: B.Tech(IT)</span>
<span class="t" style="left:1309.60px;top:731.59px;font-size:10.17px;color:#979ca1;font-weight:400;transform:scaleX(0.9509);">10 hours, 11 minutes ago</span>
<div class="a" style="left:60px;top:8px;width:174px;height:24px;overflow:hidden"><div class="a" style="left:-60px;top:-8px;width:1500px;height:794px"><span class="t" style="left:70.50px;top:13.96px;font-size:13.52px;color:#3c4043;font-weight:400;transform:scaleX(0.8591);">Site administration | Automation of Open Elective</span></div></div>
<div class="a" style="left:0px;top:118px;width:220px;height:49px;overflow:hidden"><div class="a" style="left:0px;top:-118px;width:1500px;height:794px"><span class="t" style="left:55.00px;top:134.90px;font-size:17.01px;color:rgba(210,248,255,.8);font-weight:400;transform:scaleX(0.9386);">Automation of Open Elective</span></div></div>
<div class="a" style="left:214px;top:10px;width:22px;height:20px;background:linear-gradient(to right,rgba(241,250,247,0),#f1faf7 80%)"></div>

<!-- scrollbar -->
<div class="a" style="left:1484px;top:118px;width:16px;height:676px;background:#f1f1f1"></div>
<svg style="left:1484px;top:118px" width="16" height="16"><path d="M4 11 L8 6.5 L12 11 Z" fill="#a3a3a3"/></svg>
<div class="a" style="left:1485.5px;top:134.5px;width:13px;height:475.5px;background:#c1c1c1"></div>
<!-- bottom-right overlay -->
<div class="a" style="left:1432px;top:761px;width:63px;height:31px;background:#333;border-top:1px solid #2a2a2a"></div>
<div class="a" style="left:1463px;top:761px;width:1px;height:31px;background:#2a2a2a"></div>
<div class="a" style="left:1441px;top:770px;width:4px;height:13.5px;background:#bdbdbd"></div>
<div class="a" style="left:1449.5px;top:770px;width:4px;height:13.5px;background:#bdbdbd"></div>
<svg style="left:1469px;top:768px" width="22" height="18"><rect x="1.5" y="1.5" width="18" height="14" stroke="#bdbdbd" stroke-width="1.5" fill="none"/><ellipse cx="10.5" cy="6.8" rx="2" ry="2.6" fill="#b5b5b5"/><path d="M4.5 15 Q5.5 11.3 9.5 10.8 L11.5 10.8 Q15.5 11.3 16.5 15 Z" fill="#b5b5b5"/></svg>
</body></html>
